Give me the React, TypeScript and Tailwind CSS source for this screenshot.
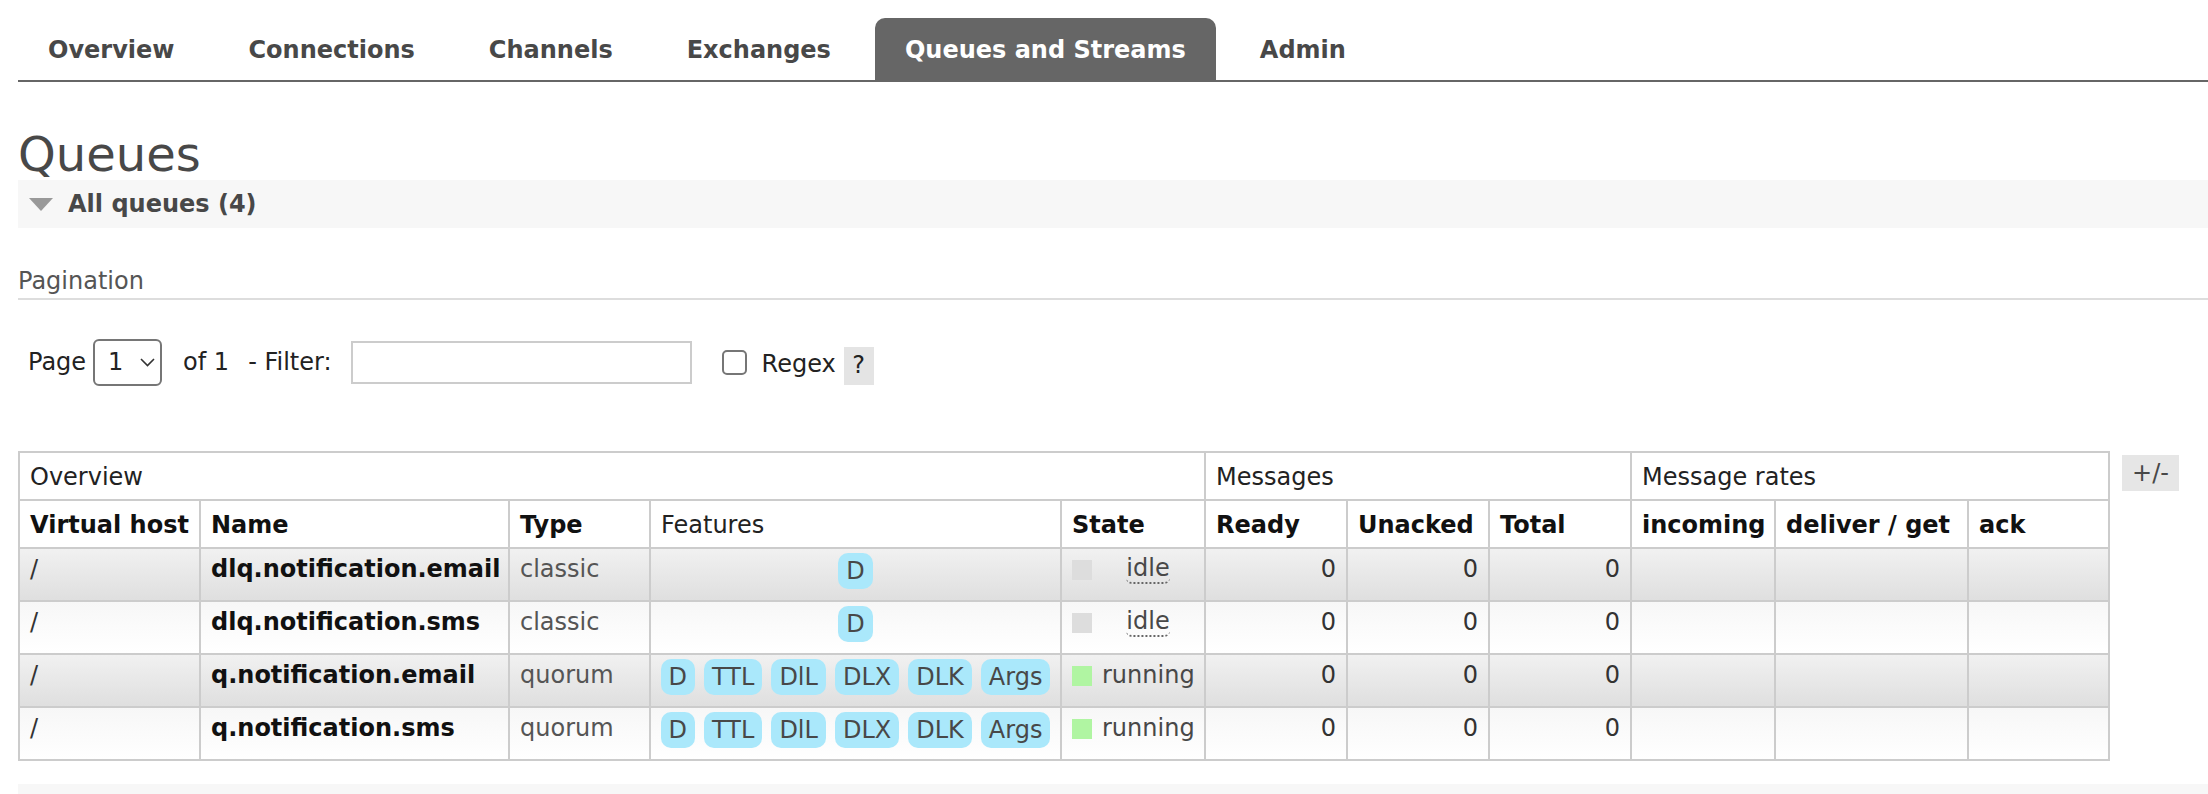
import React from 'react';

type Queue = {
    vhost: string;
    name: string;
    type: string;
    features: string[];
    state: 'idle' | 'running';
};

const tabs = ['Overview', 'Connections', 'Channels', 'Exchanges', 'Queues and Streams', 'Admin'];

const quorumFeatures = ['D', 'TTL', 'DlL', 'DLX', 'DLK', 'Args'];

const queues: Queue[] = [
    { vhost: '/', name: 'dlq.notification.email', type: 'classic', features: ['D'], state: 'idle' },
    { vhost: '/', name: 'dlq.notification.sms', type: 'classic', features: ['D'], state: 'idle' },
    { vhost: '/', name: 'q.notification.email', type: 'quorum', features: quorumFeatures, state: 'running' },
    { vhost: '/', name: 'q.notification.sms', type: 'quorum', features: quorumFeatures, state: 'running' },
];

const colWidths = [181, 309, 141, 411, 144, 142, 142, 142, 144, 193, 141];

const cell = 'border-2 border-[#ccc]';

const Badge = ({ label }: { label: string }) => (
    <span className="inline-flex h-[36px] items-center rounded-[10px] bg-[#aae8fb] px-[8px] text-[#484848]">
        {label}
    </span>
);

export default function App() {
    return (
        <div className="h-[794px] overflow-hidden bg-white pl-[18px] font-['DejaVu_Sans',Verdana,sans-serif] text-[24px] leading-[29px] text-[#484848]">
            {/* Top menu */}
            <ul className="mt-[18px] flex border-b-2 border-[#666]">
                {tabs.map((t) => (
                    <li
                        key={t}
                        className={`mr-[14px] flex h-[62px] items-center rounded-t-[10px] px-[30px] pt-[2px] font-bold ${
                            t === 'Queues and Streams' ? 'bg-[#666] text-white' : 'text-[#484848]'
                        }`}
                    >
                        {t}
                    </li>
                ))}
            </ul>

            <h1 className="mt-[48px] h-[48px] text-[48px] leading-[48px] font-normal text-[#484848]">Queues</h1>

            {/* Collapsible section header */}
            <div className="mt-[2px] flex h-[48px] items-center bg-[#f7f7f7]">
                <svg width="24" height="13" viewBox="0 0 24 13" className="ml-[11px]">
                    <polygon points="0,0 24,0 12,13" fill="#999" />
                </svg>
                <span className="ml-[15px] pt-[1px] font-bold">All queues (4)</span>
            </div>

            <div className="mt-[39px] border-b-2 border-[#ddd] pb-[2px] text-[#555]">Pagination</div>

            {/* Pagination controls */}
            <div className="mt-[39px] flex h-[47px] items-center text-[#222]">
                <span className="ml-[10px]">Page</span>
                <div className="ml-[7px] flex h-[47px] w-[69px] items-center rounded-[6px] border-2 border-[#767676] pl-[13px]">
                    <span>1</span>
                    <svg width="15" height="9" viewBox="0 0 15 9" className="ml-auto mr-[5px]">
                        <polyline points="1,1 7.5,7.5 14,1" fill="none" stroke="#333" strokeWidth="1.6" />
                    </svg>
                </div>
                <span className="ml-[21px]">of 1</span>
                <span className="ml-[19px]">- Filter:</span>
                <input
                    type="text"
                    readOnly
                    className="ml-[19px] h-[43px] w-[341px] border-2 border-[#ccc] bg-white outline-none"
                />
                <div className="ml-[30px] h-[25px] w-[25px] rounded-[5px] border-2 border-[#767676] bg-white" />
                <span className="ml-[15px] pt-[3px]">Regex</span>
                <span className="ml-[8px] mt-[6px] flex h-[38px] w-[30px] items-center justify-center bg-[#e4e4e4]">?</span>
            </div>

            {/* Queue table */}
            <div className="mt-[65px] flex items-start">
                <table className="w-[2090px] table-fixed border-collapse">
                    <colgroup>
                        {colWidths.map((w, i) => (
                            <col key={i} style={{ width: w }} />
                        ))}
                    </colgroup>
                    <thead>
                        <tr className="h-[48px]">
                            <th colSpan={5} className={`${cell} px-[10px] pt-[2px] text-left font-normal text-[#222]`}>
                                Overview
                            </th>
                            <th colSpan={3} className={`${cell} px-[10px] pt-[2px] text-left font-normal text-[#222]`}>
                                Messages
                            </th>
                            <th colSpan={3} className={`${cell} px-[10px] pt-[2px] text-left font-normal text-[#222]`}>
                                Message rates
                            </th>
                        </tr>
                        <tr className="h-[48px] text-[#111]">
                            <th className={`${cell} px-[10px] pt-[3px] text-left font-bold`}>Virtual host</th>
                            <th className={`${cell} px-[10px] pt-[3px] text-left font-bold`}>Name</th>
                            <th className={`${cell} px-[10px] pt-[3px] text-left font-bold`}>Type</th>
                            <th className={`${cell} px-[10px] pt-[3px] text-left font-normal text-[#222]`}>Features</th>
                            <th className={`${cell} px-[10px] pt-[3px] text-left font-bold`}>State</th>
                            <th className={`${cell} px-[10px] pt-[3px] text-left font-bold`}>Ready</th>
                            <th className={`${cell} px-[10px] pt-[3px] text-left font-bold`}>Unacked</th>
                            <th className={`${cell} px-[10px] pt-[3px] text-left font-bold`}>Total</th>
                            <th className={`${cell} px-[10px] pt-[3px] text-left font-bold`}>incoming</th>
                            <th className={`${cell} px-[10px] pt-[3px] text-left font-bold`}>deliver / get</th>
                            <th className={`${cell} px-[10px] pt-[3px] text-left font-bold`}>ack</th>
                        </tr>
                    </thead>
                    <tbody>
                        {queues.map((q, i) => {
                            const bg =
                                i % 2 === 0
                                    ? 'bg-linear-to-b from-[#f1f1f1] to-[#dfdfdf]'
                                    : 'bg-linear-to-b from-[#f7f7f7] to-[#ffffff]';
                            const td = `${cell} ${bg} px-[10px] pt-[6px] align-top`;
                            return (
                                <tr key={q.name} className="h-[53px]">
                                    <td className={`${td} text-[#333]`}>{q.vhost}</td>
                                    <td className={`${td} font-bold text-[#111]`}>{q.name}</td>
                                    <td className={`${td} text-[#555]`}>{q.type}</td>
                                    <td className={`${cell} ${bg} px-[10px] pt-[4px] align-top`}>
                                        <div className="flex justify-center gap-[9px]">
                                            {q.features.map((f) => (
                                                <Badge key={f} label={f} />
                                            ))}
                                        </div>
                                    </td>
                                    <td className={td}>
                                        <div className="flex items-center gap-[10px]">
                                            <span
                                                className={`h-[20px] w-[20px] shrink-0 ${
                                                    q.state === 'running' ? 'bg-[#b0f5a2]' : 'bg-[#dddddd]'
                                                }`}
                                            />
                                            <span className="flex flex-1 justify-center">
                                                {q.state === 'idle' ? (
                                                    <span className="rounded-b-[6px] border-b-2 border-dotted border-[#666] leading-[27px]">
                                                        idle
                                                    </span>
                                                ) : (
                                                    'running'
                                                )}
                                            </span>
                                        </div>
                                    </td>
                                    <td className={`${td} text-right text-[#333]`}>0</td>
                                    <td className={`${td} text-right text-[#333]`}>0</td>
                                    <td className={`${td} text-right text-[#333]`}>0</td>
                                    <td className={td} />
                                    <td className={td} />
                                    <td className={td} />
                                </tr>
                            );
                        })}
                    </tbody>
                </table>
                <span className="ml-[12px] mt-[4px] flex h-[36px] w-[57px] items-center justify-center bg-[#e6e6e6]">
                    +/-
                </span>
            </div>

            <div className="mt-[23px] h-[48px] bg-[#f7f7f7]" />
        </div>
    );
}
